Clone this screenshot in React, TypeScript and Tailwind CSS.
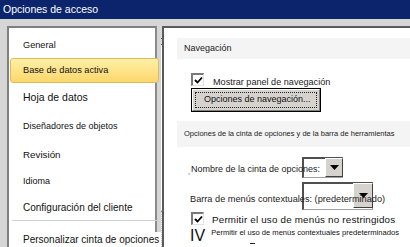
import React from "react";

const font = { fontFamily: '"Liberation Sans", Arial, sans-serif' };

const Check = () => (
  <div className="w-[13px] h-[13px] bg-white border-t-2 border-l-2 border-b border-r border-t-[#7a7a7a] border-l-[#7a7a7a] border-b-[#e4e4e4] border-r-[#e4e4e4] flex items-center justify-center shrink-0">
    <svg width="9" height="9" viewBox="0 0 9 9">
      <path d="M1 4 L3.5 6.5 L8 1.5" stroke="#000" strokeWidth="1.8" fill="none" />
    </svg>
  </div>
);

const DropButton = ({ className }: { className: string }) => (
  <div
    className={`absolute bg-[#d6d3ce] border border-t-white border-l-white border-b-[#404040] border-r-[#404040] flex items-center justify-center ${className}`}
  >
    <svg width="9" height="5" viewBox="0 0 9 5">
      <path d="M0 0 H9 L4.5 5 Z" fill="#000" />
    </svg>
  </div>
);

const items = [
  { label: "Hoja de datos", cls: "h-[30px] text-[10.5px]" },
  { label: "Diseñadores de objetos", cls: "h-[28px] text-[9px]" },
  { label: "Revisión", cls: "h-[28px] text-[9.8px]" },
  { label: "Idioma", cls: "h-[26px] text-[9px]" },
  { label: "Configuración del cliente", cls: "h-[25px] text-[10px]" },
];

export default function App() {
  return (
    <div className="w-[410px] h-[247px] overflow-hidden bg-[#d6d6d6] flex flex-col" style={font}>
      {/* title bar */}
      <div className="h-[19px] bg-[#0b246b] text-white text-[10.5px] flex items-center pl-[3px] shrink-0">
        Opciones de acceso
      </div>
      <div className="flex flex-1 pt-[7px] pl-[7px]">
        {/* left list */}
        <div className="w-[150px] h-[230px] bg-white border-t-2 border-l-2 border-r-2 border-t-[#808080] border-l-[#808080] border-r-[#8a8a8a] flex">
          <div className="flex-1 flex flex-col text-[#111] pt-[7px] pl-[1px]">
            <div className="h-[22px] mb-[1px] flex items-center pl-[13px] text-[9.2px]">General</div>
            <div className="h-[25px] mr-[2px] rounded-[3px] border border-[#dcbc5e] bg-gradient-to-b from-[#fff0a6] to-[#fcd76a] flex items-center pl-[12px] text-[9.2px]">
              Base de datos activa
            </div>
            {items.map((it) => (
              <div key={it.label} className={`flex items-center pl-[13px] whitespace-nowrap ${it.cls}`}>
                {it.label}
              </div>
            ))}
            <div className="ml-[2px] mr-[2px] border-t border-[#d0d0d0]" />
            <div className="relative z-10 mt-[6px] h-[24px] flex items-center pl-[13px] text-[10px] whitespace-nowrap">
              <span className="bg-white pr-[2px]">Personalizar cinta de opciones</span>
            </div>
          </div>
          <div className="w-[16px] flex flex-col bg-[#e6e6e6]">
            <div className="h-[17px] bg-[#dcdcdc] border-b border-[#5a5a5a] flex items-center justify-center">
              <svg width="9" height="5" viewBox="0 0 9 5">
                <path d="M0 5 H9 L4.5 0 Z" fill="#000" />
              </svg>
            </div>
            <div className="h-[167px] bg-[#d6d6d6] border-r-2 border-b-2 border-r-[#6e6e6e] border-b-[#6e6e6e] border-l border-l-white" />
            <div className="flex-1 bg-[repeating-conic-gradient(#ffffff_0_25%,#c8c8c8_0_50%)] bg-[length:2px_2px]" />
          </div>
        </div>
        {/* right content */}
        <div className="ml-[5px] w-[248px] h-[230px] bg-white border-t-2 border-l-2 border-t-[#5a5a5a] border-l-[#5a5a5a] pt-[10px] pl-[13px]">
          <div className="h-[22px] bg-[#f4f4f4] border-b border-white flex items-center pl-[7px] text-[9px] text-[#222]">
            Navegación
          </div>
          <div className="h-[13px] flex items-center gap-[9px] mt-[13px] pl-[14px]">
            <Check />
            <span className="text-[9.1px] leading-none text-[#222] relative top-[3px] whitespace-nowrap">
              Mostrar panel de navegación
            </span>
          </div>
          <div className="ml-[14px] mt-[2px] w-[130px] h-[24px] bg-[#d6d3ce] border border-black flex">
            <div className="flex-1 border border-t-white border-l-white border-b-[#808080] border-r-[#808080] p-[2px]">
              <div className="h-full border border-dotted border-[#222] flex items-center pl-[8px] text-[9px] text-[#111] whitespace-nowrap">
                Opciones de navegación...
              </div>
            </div>
          </div>
          <div className="mt-[9px] h-[26px] bg-[#f4f4f4] flex items-center pl-[7px] text-[7.5px] text-[#222] whitespace-nowrap">
            Opciones de la cinta de opciones y de la barra de herramientas
          </div>
          <div className="relative h-[63px] pl-[13px] text-[#222]">
            <div className="absolute left-[125px] top-[10px] w-[41px] h-[21px] border-t-2 border-l-2 border-b border-r border-t-[#505050] border-l-[#505050] border-b-[#a0a0a0] border-r-[#a0a0a0]" />
            <DropButton className="left-[148px] top-[11px] w-[18px] h-[19px]" />
            <div className="absolute left-[125px] top-[35px] w-[71px] h-[28px] border-t-2 border-l-2 border-b border-r border-t-[#505050] border-l-[#505050] border-b-[#a0a0a0] border-r-[#a0a0a0]" />
            <DropButton className="left-[176px] top-[36px] w-[20px] h-[25px]" />
            <div className="relative pt-[17px] h-[29px] flex items-center text-[9px] whitespace-nowrap">
              <span className="text-[7px] -ml-[2px] mt-[4px] mr-[1px]">,</span>
              Nombre de la cinta de opciones:
            </div>
            <div className="relative mt-[17px] text-[9.2px] leading-[12px] whitespace-nowrap">
              Barra de menús contextuales: (predeterminado)
            </div>
          </div>
          <div className="h-[13px] flex items-center gap-[8px] pl-[14px] mt-[2px]">
            <Check />
            <span className="text-[9.8px] leading-none tracking-[0.2px] text-[#111] whitespace-nowrap relative top-[1px]">
              Permitir el uso de menús no restringidos
            </span>
          </div>
          <div className="flex items-start gap-[6px] pl-[13px] mt-[2px]">
            <span className="text-[16px] leading-[16px] text-[#111] relative top-[1px]">IV</span>
            <div className="flex flex-col">
              <span className="text-[7.6px] text-[#111] whitespace-nowrap leading-[9px] relative top-[1px]">
                Permitir el uso de menús contextuales predeterminados
              </span>
              <span className="ml-[39px] mt-[7px] w-[5px] border-t border-[#222]" />
            </div>
          </div>
        </div>
      </div>
    </div>
  );
}
